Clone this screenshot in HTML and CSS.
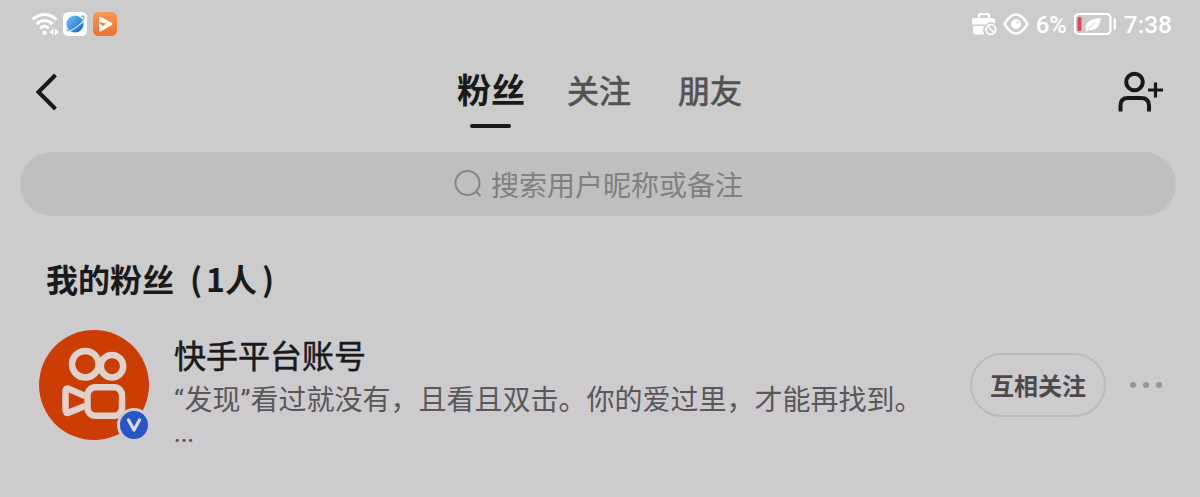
FILE: index.html
```
<!DOCTYPE html>
<html lang="zh-CN">
<head>
<meta charset="utf-8">
<title>粉丝</title>
<link rel="stylesheet" href="styles.css">
</head>
<body>
<div class="status">
<div class="status-left">
<svg class="wifi" width="28" height="24" viewBox="0 0 28 24" fill="none" stroke="#fff" stroke-width="3">
<path d="M1.5 7.5Q13.500 -2.500 25.500 7.500M5.500 12Q13.500 5 21.500 12M9.300 16.300Q13.500 12.500 17.700 16.300"/>
<circle cx="13.500" cy="20.800" r="2.300" fill="#fff" stroke="none"/>
<path d="M22.500 16.500v7l-4-3.500zM24 16.500v7l4-3.500z" fill="#fff" stroke="none"/>
</svg>
<svg class="app" width="24" height="24" viewBox="0 0 24 24">
<defs><linearGradient id="globe" x2="1" y2="1"><stop stop-color="#75c5ff"/><stop offset="1" stop-color="#135ed0"/></linearGradient></defs>
<rect width="24" height="24" rx="5.500" fill="#fff"/>
<circle cx="12" cy="12" r="8.600" fill="url(#globe)"/>
<path d="M18 5C24 2 22 8 16 13S3 21 4 17" fill="none" stroke="#d5e9fa" stroke-width="1.600"/>
<path d="M18 4.500C23 2 21 8 15.500 12.500S3.500 20 4 17" fill="none" stroke="#4697e4" stroke-width="1"/>
</svg>
<svg class="app" width="24" height="24" viewBox="0 0 24 24">
<defs><linearGradient id="video" x2="0" y2="1"><stop stop-color="#fa9853"/><stop offset="1" stop-color="#ed712e"/></linearGradient></defs>
<rect width="24" height="24" rx="5.500" fill="url(#video)"/>
<path d="M7.500 6.200L18 12L7.500 18z" fill="#fff5e8" stroke="#fff5e8" stroke-width="3" stroke-linejoin="round"/>
<path d="M5 10l8 1.500-3 2.500z" fill="#d98350"/>
</svg>
</div>
<div class="status-right">
<svg class="bag" width="26" height="24" viewBox="0 0 26 24">
<path d="M7 6V4q0-2 2-2h6q2 0 2 2v2" fill="none" stroke="#fff" stroke-width="2.200"/>
<path d="M3 6h18q2 0 2 2v3.500a7 7 0 0 0-9 1H0V8q0-2 3-2zM1 14h11.500a7 7 0 0 0 0 8.500H3q-2 0-2-2z" fill="#fff"/>
<circle cx="18.800" cy="17.500" r="4.800" fill="none" stroke="#fff" stroke-width="1.800"/>
<path d="M15.500 14.200l6.600 6.600" stroke="#fff" stroke-width="1.600"/>
</svg>
<svg class="eye" width="26" height="22" viewBox="0 0 26 22" fill="none" stroke="#fff">
<path d="M1.500 11Q7 1.500 13 1.500T24.500 11Q19 20.500 13 20.500T1.500 11z" stroke-width="2.400"/>
<circle cx="13" cy="11" r="4.800" fill="#fff" stroke="none"/>
<path d="M13.500 9q1.500 0 1.500 1.700" stroke="#ccc" stroke-width="1.300"/>
</svg>
<span class="percent">6%</span>
<svg class="battery" width="43" height="22" viewBox="0 0 43 22">
<rect x="1" y="1" width="35.500" height="20" rx="4" fill="none" stroke="#fff" stroke-width="2"/>
<rect x="3.500" y="4" width="4" height="14" rx="1.500" fill="#dc4658"/>
<path d="M12 17.500Q9.500 6 26.500 5Q26.500 18 14.500 17L12 19z" fill="#fff"/>
<path d="M14 16Q17 12 21 10" fill="none" stroke="#ccc" stroke-width="0.800"/>
<path d="M40.700 5.500v11" stroke="#fff" stroke-width="2.400"/>
</svg>
<span class="clock">7:38</span>
</div>
</div>

<div class="header">
<svg class="back" width="24" height="38" viewBox="0 0 24 38" fill="none" stroke="#181818" stroke-width="4">
<path d="M20.500 2L3.500 19L20.500 36"/>
</svg>
<div class="tabs">
<span class="tab active">粉丝</span>
<span class="tab">关注</span>
<span class="tab">朋友</span>
</div>
<svg class="add" width="46" height="42" viewBox="0 0 46 42" fill="none" stroke="#181818" stroke-width="4">
<circle cx="16.500" cy="11" r="8.300"/>
<path d="M2.500 40.500V34.500Q2.500 27 10 27H23Q31 27 31 34.500V40.500"/>
<path d="M30 19H45M37.500 11.500V26.500" stroke-width="3.200"/>
</svg>
</div>

<div class="search">
<svg width="30" height="30" viewBox="0 0 30 30" fill="none" stroke="#858585" stroke-width="2">
<circle cx="14.500" cy="14" r="12"/>
<path d="M23 22.500L27.500 27"/>
</svg>
<span>搜索用户昵称或备注</span>
</div>

<h2 class="title">我的粉丝<span class="paren open">(</span>1人<span class="paren close">)</span></h2>

<div class="user">
<div class="avatar">
<svg width="110" height="110" viewBox="0 0 110 110" fill="none" stroke="#dfd2cd" stroke-width="6.500">
<circle cx="55" cy="55" r="55" fill="#cc3d03" stroke="none"/>
<circle cx="46.300" cy="34.200" r="13.300"/>
<circle cx="73" cy="36.200" r="11.200"/>
<rect x="48.500" y="57.300" width="34.500" height="28.500" rx="8"/>
<path d="M46 66L30 59Q26.500 57.500 26.500 61V80Q26.500 84 30 82.500L46 76" stroke-linejoin="round"/>
</svg>
<span class="badge"><svg width="16" height="14" viewBox="0 0 16 14" fill="none" stroke="#dcdce2" stroke-width="3.200" stroke-linecap="round" stroke-linejoin="round"><path d="M2.500 2L8 12L13.500 2"/></svg></span>
</div>
<div class="info">
<div class="name">快手平台账号</div>
<div class="desc"><span class="quote">“</span>发现<span class="quote">”</span>看过就没有，且看且双击。你的爱过里，才能再找到。</div>
<div class="dots">...</div>
</div>
<div class="follow">互相关注</div>
<svg class="more" width="34" height="8" viewBox="0 0 34 8" fill="#969498">
<circle cx="4" cy="4" r="3"/>
<circle cx="17" cy="4" r="3"/>
<circle cx="30" cy="4" r="3"/>
</svg>
</div>
</body>
</html>
```

FILE: styles.css
```
body {
margin: 0;
height: 497px;
overflow: hidden;
background: linear-gradient(#ccc 260px, #cdcbce 400px);
color: #1a1a1a;
font-family: "Noto Sans CJK SC", sans-serif;
}

svg {
display: block;
flex: none;
}

/* Status bar */

.status {
display: flex;
justify-content: space-between;
box-sizing: border-box;
height: 48px;
padding: 12px 28px 0 31px;
}

.status-left {
display: flex;
}

.app {
margin-left: 4px;
}

.app + .app {
margin-left: 6px;
}

.status-right {
display: flex;
align-items: center;
height: 24px;
color: #fff;
font: 500 24.5px/26px Roboto, sans-serif;
}

.eye {
margin-left: 5px;
}

.percent {
width: 32px;
margin-left: 7px;
padding-top: 2px;
font-size: 24px;
letter-spacing: -0.5px;
}

.battery {
margin-left: 6px;
}

.clock {
margin-left: 7px;
padding-top: 2px;
}

/* Header with tabs */

.header {
display: grid;
grid-template-columns: 1fr auto 1fr;
align-items: start;
height: 104px;
padding: 0 36px 0 35px;
}

.back {
margin-top: 25px;
}

.tabs {
display: flex;
height: 80px;
}

.tab {
margin-left: 47px;
color: #525252;
font-size: 32px;
line-height: 82px;
-webkit-text-stroke: 0.7px;
}

.active {
display: flex;
flex-direction: column;
align-items: center;
margin-left: 0;
color: #1a1a1a;
font-size: 34px;
font-weight: bold;
-webkit-text-stroke: 0;
}

.active + .tab {
margin-left: 42px;
}

.active::after {
content: "";
width: 41px;
height: 4px;
margin-top: -6px;
border-radius: 2px;
background: #1a1a1a;
}

.add {
justify-self: end;
margin-top: 23px;
}

/* Search */

.search {
display: flex;
align-items: center;
justify-content: center;
gap: 8px;
height: 64px;
margin: 0 24px 0 20px;
border-radius: 32px;
background: #bfbfbf;
color: #808080;
font-size: 28px;
line-height: 64px;
}

.search span {
height: 64px;
}

/* Fans */

.title {
height: 48px;
margin: 38px 0 27px 46px;
font-size: 32px;
line-height: 48px;
}

.paren {
display: inline-block;
width: 32px;
box-sizing: border-box;
}

.open {
padding-right: 4px;
text-align: right;
}

.close {
padding-left: 5px;
}

.user {
display: flex;
align-items: flex-start;
padding: 0 37px 0 39px;
}

.avatar {
position: relative;
width: 110px;
height: 110px;
margin-top: 1px;
}

.badge {
position: absolute;
right: -2px;
bottom: -2px;
display: flex;
align-items: center;
justify-content: center;
width: 28px;
height: 28px;
border: 3px solid #cecccf;
border-radius: 50%;
background: #2656c8;
}

.info {
flex: 1;
margin-left: 25px;
}

.name {
font-size: 32px;
line-height: 50px;
-webkit-text-stroke: 0.5px;
}

.desc {
color: #59575a;
font-size: 28px;
line-height: 38px;
white-space: nowrap;
}

.quote {
display: inline-block;
width: 10.5px;
font-family: Roboto, sans-serif;
letter-spacing: -1px;
}

.quote + .quote {
width: 10px;
}

.dots {
color: #59575a;
font: 500 24px/28px Roboto, sans-serif;
}

.follow {
box-sizing: border-box;
width: 136px;
height: 64px;
margin-top: 24px;
border: 2px solid #bcbabd;
border-radius: 32px;
color: #4b494c;
font-size: 24px;
font-weight: bold;
line-height: 60px;
text-align: center;
}

.more {
margin: 52px 0 0 23px;
}
```
